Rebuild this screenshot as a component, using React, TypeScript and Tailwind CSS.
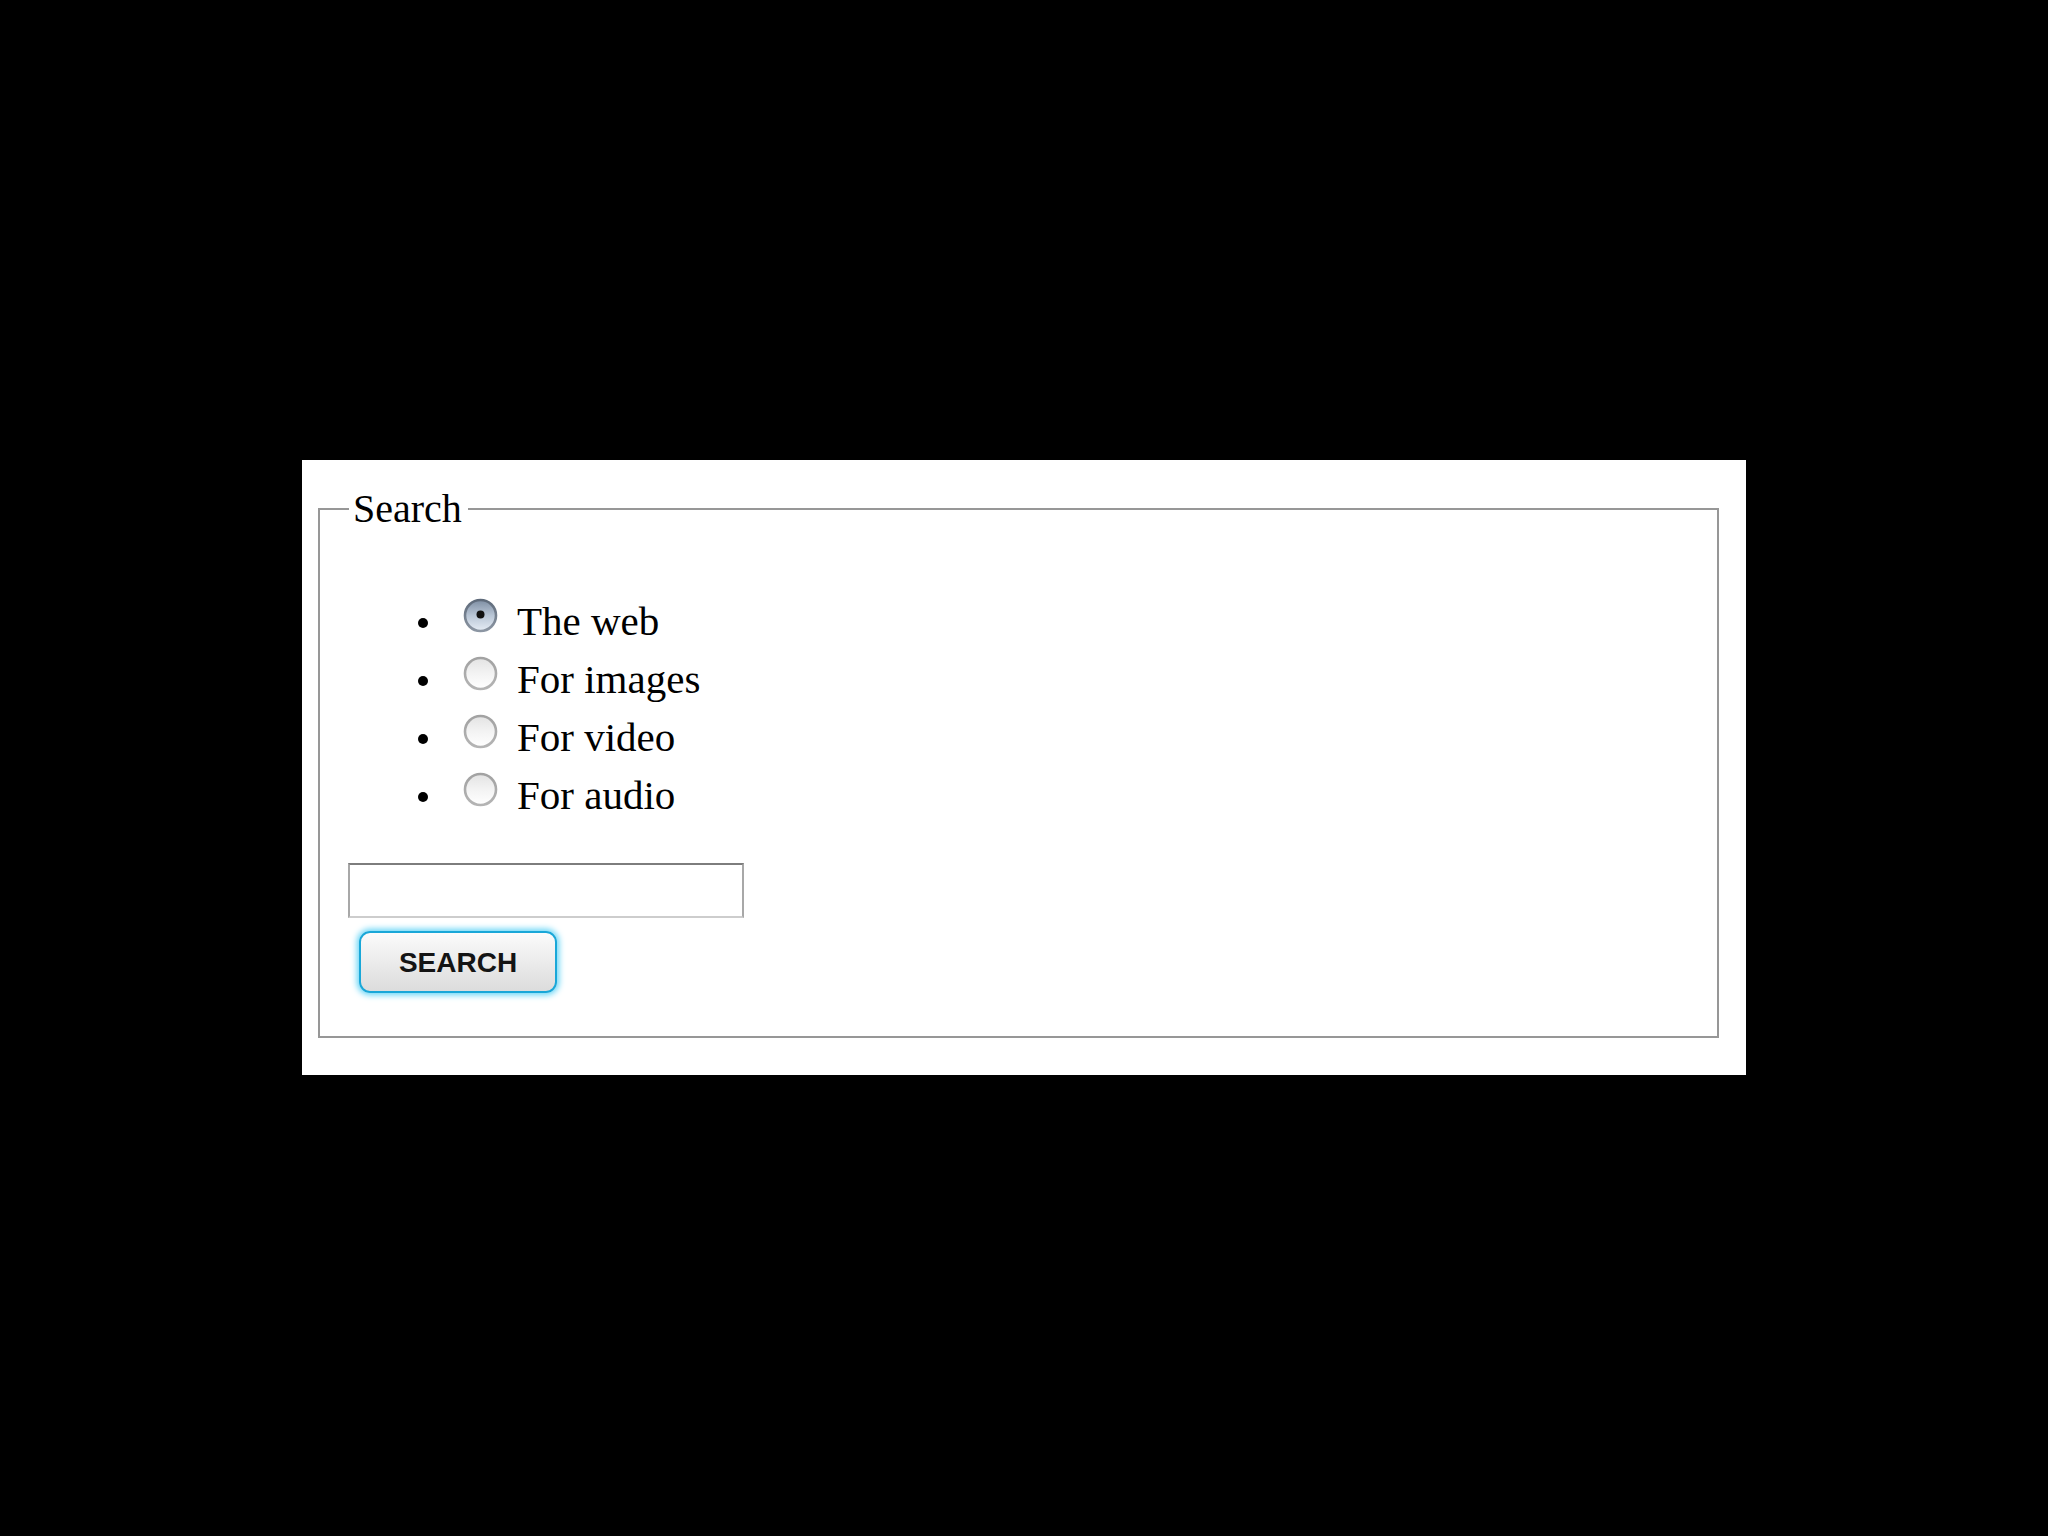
import React from "react";

function Radio({ checked }: { checked?: boolean }) {
  return (
    <svg width="35" height="35" viewBox="0 0 35 35" className="shrink-0">
      <defs>
        <linearGradient id={checked ? "rfillc" : "rfill"} x1="0" y1="0" x2="0" y2="1">
          {checked ? (
            <>
              <stop offset="0" stopColor="#7e8ea3" />
              <stop offset="0.5" stopColor="#b9c6d6" />
              <stop offset="1" stopColor="#e6edf5" />
            </>
          ) : (
            <>
              <stop offset="0" stopColor="#e3e3e3" />
              <stop offset="0.5" stopColor="#f3f3f3" />
              <stop offset="1" stopColor="#ffffff" />
            </>
          )}
        </linearGradient>
        <linearGradient id={checked ? "rstrokec" : "rstroke"} x1="0" y1="0" x2="0" y2="1">
          {checked ? (
            <>
              <stop offset="0" stopColor="#5e6a7a" />
              <stop offset="1" stopColor="#8c96a3" />
            </>
          ) : (
            <>
              <stop offset="0" stopColor="#a2a2a2" />
              <stop offset="1" stopColor="#b4b4b4" />
            </>
          )}
        </linearGradient>
      </defs>
      <circle
        cx="17.5"
        cy="17.5"
        r="15.5"
        fill={`url(#${checked ? "rfillc" : "rfill"})`}
        stroke={`url(#${checked ? "rstrokec" : "rstroke"})`}
        strokeWidth="2.6"
      />
      {checked && <circle cx="17.5" cy="16.5" r="4" fill="#111" />}
    </svg>
  );
}

const items = [
  { label: "The web", checked: true },
  { label: "For images" },
  { label: "For video" },
  { label: "For audio" },
];

export default function App() {
  return (
    <div className="min-h-[1536px] w-[2048px] bg-black pt-[460px] pl-[302px]">
      <div className="w-[1444px] h-[615px] bg-white pt-[19px] pl-[16px] pr-[27px]">
        <fieldset className="h-[559px] border-2 border-[#979797] pl-[28px] pr-0 pt-0 pb-0 m-0 min-w-0">
          <legend
            className="ml-[1px] pl-[4px] pr-[6px] text-[40px] text-black"
            style={{ fontFamily: '"Liberation Serif", "Times New Roman", serif' }}
          >
            Search
          </legend>
          <ul
            className="mt-[53px] flex flex-col text-[41px] leading-[58px] text-black"
            style={{ fontFamily: '"Liberation Serif", "Times New Roman", serif' }}
          >
            {items.map((it) => (
              <li key={it.label} className="flex h-[58px] items-start">
                <span className="ml-[70px] mt-[26px] h-[10px] w-[10px] shrink-0 rounded-full bg-black" />
                <span className="ml-[35px] mt-[6px] flex">
                  <Radio checked={it.checked} />
                </span>
                <span className="ml-[19px]">{it.label}</span>
              </li>
            ))}
          </ul>
          <div className="mt-[39px] h-[55px] w-[396px] border-2 border-t-[#7d7d7d] border-l-[#a8a8a8] border-r-[#a8a8a8] border-b-[#cdcdcd] bg-white" />
          <button
            className="ml-[11px] mt-[13px] flex h-[62px] w-[198px] items-center justify-center rounded-[11px] border-2 border-[#19a7d8] bg-gradient-to-b from-[#fbfbfb] to-[#dcdcdc] pt-[2px] text-[28px] font-bold text-[#141414] shadow-[0_0_6px_2px_#62d4f6]"
            style={{ fontFamily: '"Liberation Sans", Arial, sans-serif' }}
          >
            SEARCH
          </button>
        </fieldset>
      </div>
    </div>
  );
}
